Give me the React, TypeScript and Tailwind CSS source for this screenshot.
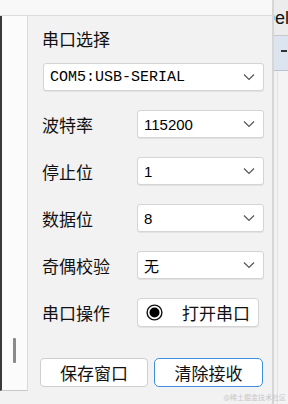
import React from 'react'

const cjk = { fontFamily: '"Noto Sans CJK SC", "Noto Sans", sans-serif' }

function Chevron() {
  return (
    <svg width="12" height="8" viewBox="0 0 12 8" className="shrink-0">
      <polyline points="1,1.5 6,6.5 11,1.5" fill="none" stroke="#555" strokeWidth="1.2" />
    </svg>
  )
}

type ComboProps = {
  value: string
  mono?: boolean
  cjkValue?: boolean
  className?: string
}

function Combo({ value, mono, cjkValue, className }: ComboProps) {
  const font = mono
    ? { fontFamily: '"Liberation Mono", monospace' }
    : cjkValue
      ? cjk
      : { fontFamily: '"Liberation Sans", sans-serif' }
  return (
    <div
      className={`flex items-center justify-between h-[28px] bg-white border border-[#d4d4d4] rounded-[3px] pl-[6px] pr-[8px] shadow-[0_1px_0_#e2e2e2] ${className ?? ''}`}
    >
      <span className="text-[15px] text-black leading-none" style={font}>
        {value}
      </span>
      <Chevron />
    </div>
  )
}

function Row({ label, children }: { label: string; children: React.ReactNode }) {
  return (
    <div className="flex items-center h-[28px]">
      <span className="w-[95px] text-[17px] text-[#111] leading-none" style={cjk}>
        {label}
      </span>
      {children}
    </div>
  )
}

export default function App() {
  const rows = [
    { label: '波特率', value: '115200' },
    { label: '停止位', value: '1' },
    { label: '数据位', value: '8' },
    { label: '奇偶校验', value: '无', cjkValue: true },
  ]

  return (
    <div className="relative flex w-[288px] h-[404px] bg-[#f2f2f2] overflow-hidden">
      {/* Left column: top strip + side panel + settings */}
      <div className="flex flex-col w-[272px]">
        <div className="h-[16px] bg-[#f8f8f8] border-b border-[#dcdcdc]" />
        <div className="flex flex-1">
          {/* side panel */}
          <div className="flex flex-col w-[28px] h-[375px]">
            <div className="flex flex-1 border-l-2 border-[#3a3a3a] border-r border-r-[#dadada] border-b border-b-[#c8c8c8] bg-[#fbfbfb]">
              <div className="flex flex-col justify-end pb-[27px] pl-[11px]">
                <div className="w-[3px] h-[25px] bg-[#8a8a8a] rounded-[1px]" />
              </div>
            </div>
          </div>

          {/* settings */}
          <div className="flex flex-col flex-1 pl-[14px] pr-[8px]">
            <div className="mt-[8px] h-[28px] flex items-center text-[17px] text-[#111] leading-none" style={cjk}>
              串口选择
            </div>
            <Combo value="COM5:USB-SERIAL" mono className="mt-[11px] ml-[1px]" />

            <div className="flex flex-col gap-[19px] mt-[19px]">
              {rows.map(r => (
                <Row key={r.label} label={r.label}>
                  <Combo value={r.value} cjkValue={r.cjkValue} className="w-[127px]" />
                </Row>
              ))}
              <Row label="串口操作">
                <div className="flex items-center w-[122px] h-[29px] bg-white border border-[#d4d4d4] rounded-[4px] pl-[8px] gap-[19px] shadow-[0_1px_0_#e2e2e2]">
                  <svg width="17" height="17" viewBox="0 0 17 17">
                    <circle cx="8.5" cy="8.5" r="7.4" fill="white" stroke="#111" strokeWidth="1.4" />
                    <circle cx="8.5" cy="8.5" r="5" fill="#000" />
                  </svg>
                  <span className="text-[17px] text-[#111] leading-none" style={cjk}>
                    打开串口
                  </span>
                </div>
              </Row>
            </div>

            <div className="flex gap-[6px] mt-[32px] -ml-[2px]">
              <button
                className="w-[108px] h-[29px] bg-white border border-[#cfcfcf] rounded-[4px] text-[17px] text-[#111] leading-none"
                style={cjk}
              >
                保存窗口
              </button>
              <button
                className="w-[109px] h-[29px] bg-white border-[1.5px] border-[#3d8fe0] rounded-[5px] text-[17px] text-[#111] leading-none"
                style={cjk}
              >
                清除接收
              </button>
            </div>
          </div>
        </div>
      </div>

      {/* Right strip: neighbouring window, clipped */}
      <div className="flex flex-col w-[16px] border-l-2 border-[#d6d6d6]">
        <div className="h-[36px] bg-[#ececec] border-b border-[#c9c9c9] overflow-hidden flex items-center">
          <span className="shrink-0 text-[18px] text-[#111] leading-none -ml-[12px]" style={{ fontFamily: '"Liberation Sans", sans-serif' }}>
            Del
          </span>
        </div>
        <div className="h-[35px] bg-[#dbe4ef] border-b border-[#b9c4d2] flex justify-end pt-[14px] pr-[1px]">
          <div className="w-[6px] h-[2px] bg-[#333]" />
        </div>
        <div className="flex-1 bg-[#f4f4f4] border-l border-[#e2e2e2] ml-[3px]" />
      </div>

      {/* watermark */}
      <span
        className="absolute right-[2px] bottom-[3px] text-[7px] text-[#c8c8c8] leading-none"
        style={cjk}
      >
        @稀土掘金技术社区
      </span>
    </div>
  )
}
